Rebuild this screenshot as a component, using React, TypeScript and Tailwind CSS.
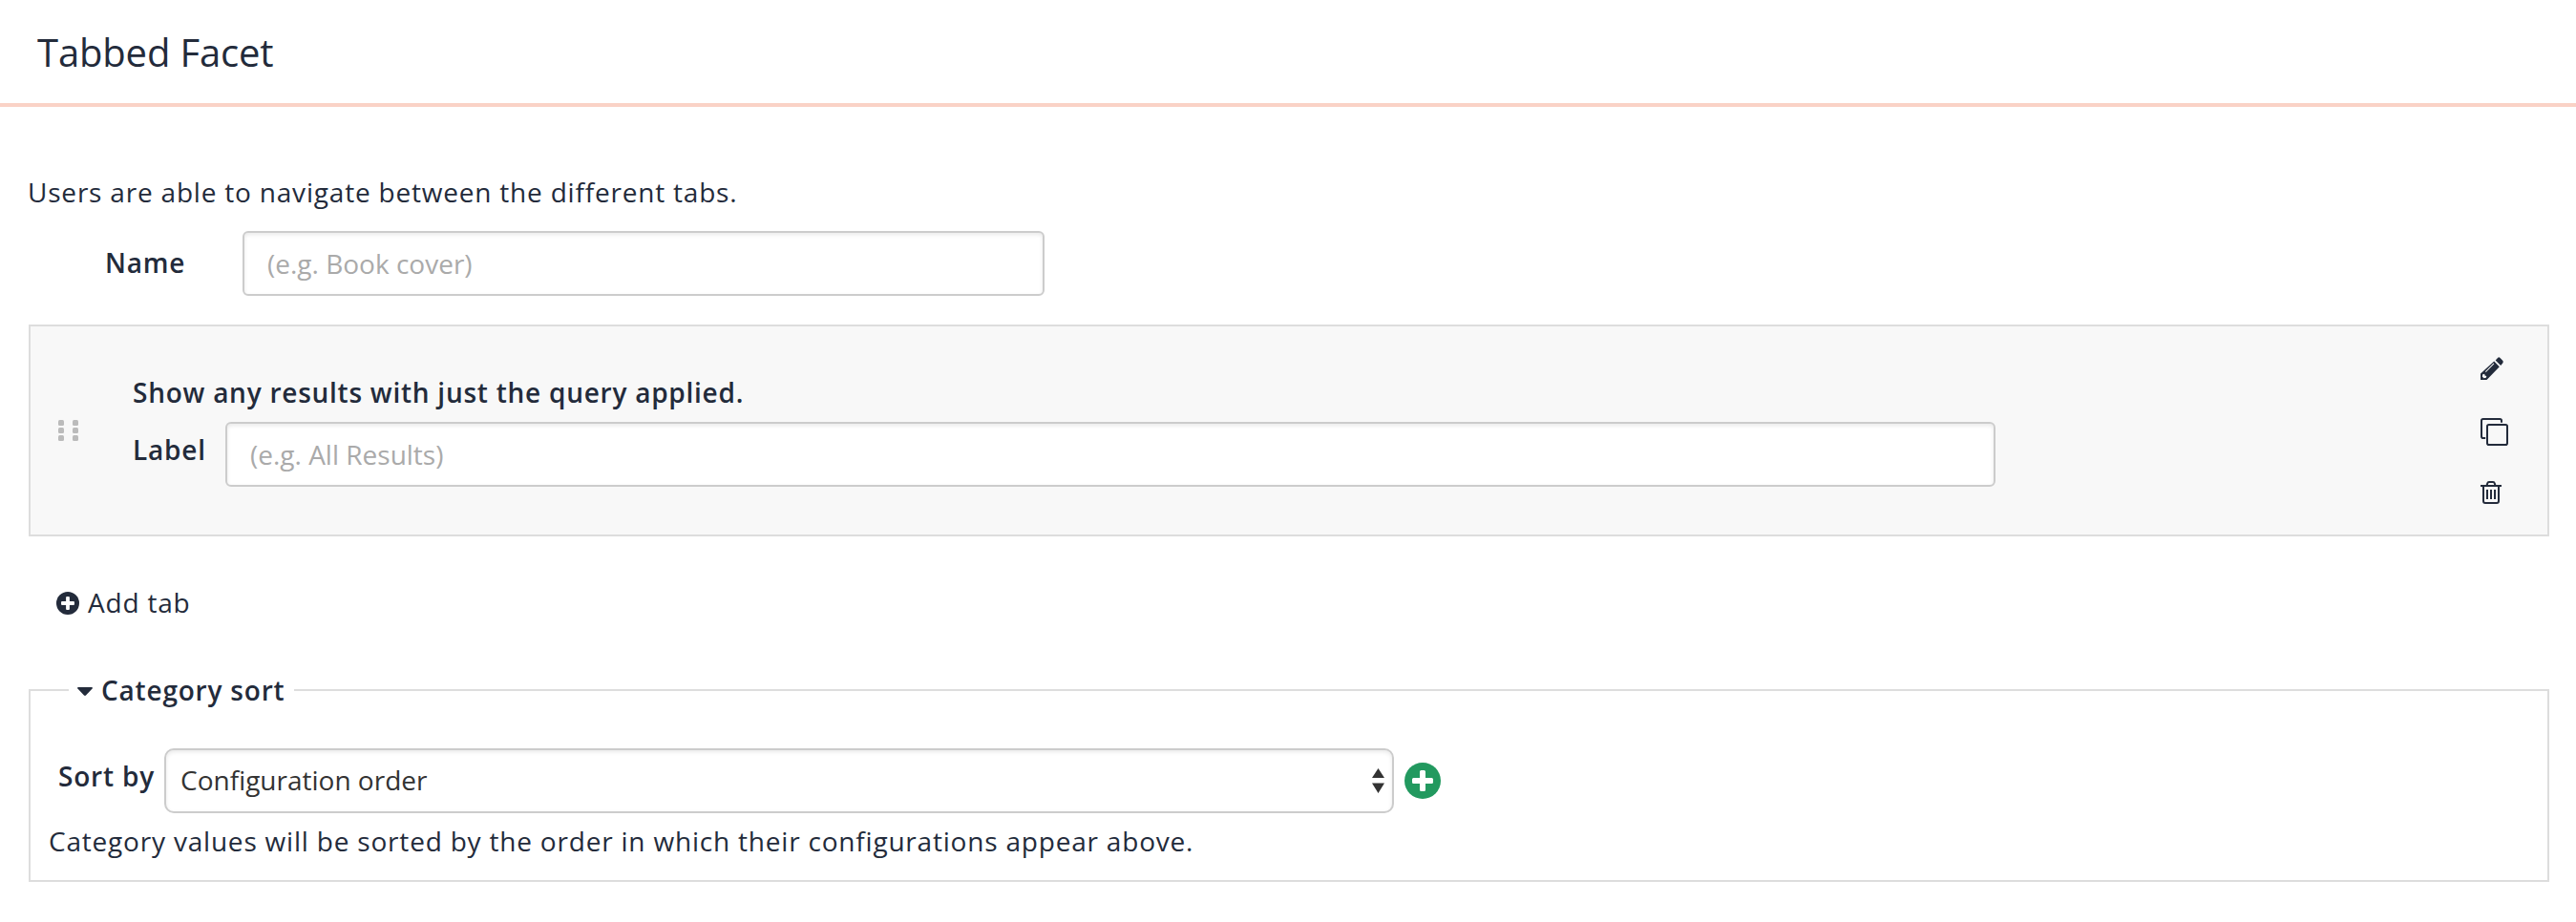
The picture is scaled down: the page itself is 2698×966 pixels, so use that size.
import { useState } from "react";

const inputClass =
  "h-[68px] rounded-[6px] border-2 border-[#ccc] bg-white px-6 text-[28px] tracking-normal text-[#333] shadow-[inset_0_2px_4px_rgba(0,0,0,0.09)] outline-none placeholder:text-[#aaa]";

const PencilIcon = () => (
  <svg className="block" width="24" height="24" viewBox="0 0 24 24" fill="currentColor">
    <path d="M15.700 3.400 18 .9Q19.200-.2 20.500.9L23.200 3.700Q24.300 5 23.300 6.300L21.200 8.900Z" />
    <path
      fillRule="evenodd"
      d="M14.200 4.600 19.800 10.200 7 23.400 6.400 24H0V17.600L.8 16.800ZM13.600 6.600 5 15.200 5.700 15.900 14.300 7.300ZM2.300 18.200 1.800 20.600 3.500 22.200 5.900 21.700 6.300 20.100 4.500 19.600 4.200 17.700Z"
    />
  </svg>
);

const CopyIcon = () => (
  <svg className="block" width="29" height="29" viewBox="0 0 29 29" fill="none" stroke="currentColor" strokeWidth="2">
    <rect x="7" y="7" width="21" height="21" rx="1.8" />
    <path d="M22 4.800V2.800Q22 1 20.200 1H2.800Q1 1 1 2.800V19.200Q1 21 2.800 21H5.200" />
  </svg>
);

const TrashIcon = () => (
  <svg className="block" width="22" height="24" viewBox="0 0 22 24" fill="none" stroke="currentColor" strokeWidth="2">
    <path d="M0 5H22M6.600 4.600 7.200 2.400Q7.600 1 9 1H13Q14.400 1 14.800 2.400L15.400 4.600" />
    <path d="M3 5V21Q3 23 5 23H17Q19 23 19 21V5" />
    <path d="M7 9V19M11 9V19M15 9V19" />
  </svg>
);

const PlusCircle = ({ className }: { className: string }) => (
  <svg className={className} viewBox="0 0 38 38">
    <circle cx="19" cy="19" r="19" fill="currentColor" />
    <path
      fill="#fff"
      d="M17.500 8h3q1.500 0 1.500 1.500V16h6.500q1.500 0 1.500 1.500v3q0 1.500-1.500 1.500H22v6.500q0 1.500-1.500 1.500h-3q-1.500 0-1.500-1.500V22H9.500q-1.500 0-1.500-1.500v-3q0-1.500 1.500-1.500H16V9.500q0-1.500 1.500-1.500z"
    />
  </svg>
);

const DragHandle = () => (
  <div className="grid cursor-move grid-cols-2 gap-x-[9px] gap-y-[2px]">
    {[0, 1, 2, 3, 4, 5].map((dot) => (
      <span key={dot} className="size-[6px] rounded-[1.5px] bg-[#bbb]" />
    ))}
  </div>
);

const App = () => {
  const [name, setName] = useState("");
  const [label, setLabel] = useState("");
  const [open, setOpen] = useState(true);

  return (
    <div className="min-h-screen bg-white font-['Open_Sans',sans-serif] text-[28px] leading-[40px] tracking-[0.8px] text-[#232b3b]">
      <header className="h-28 border-b-4 border-[#fad2c6] pt-[27px] pl-[39px]">
        <h1 className="text-[40px] leading-[56px] tracking-[-0.15px]">Tabbed Facet</h1>
      </header>

      <main className="px-7 pt-[69px]">
        <p className="pl-px">Users are able to navigate between the different tabs.</p>
        <div className="mt-[21px] flex">
          <label className="w-[226px] pt-[13px] pl-[82px] font-semibold">Name</label>
          <input
            type="text"
            className={`${inputClass} w-[840px]`}
            placeholder="(e.g. Book cover)"
            value={name}
            onChange={(e) => setName(e.target.value)}
          />
        </div>

        <section className="mt-[30px] ml-[2px] flex h-[222px] items-center border-2 border-[#ddd] bg-[#f8f8f8] pl-[29px]">
          <DragHandle />
          <div className="ml-[56px] pb-px">
            <p className="pl-px tracking-[0.75px] font-semibold">Show any results with just the query applied.</p>
            <div className="mt-[11px] flex">
              <label className="w-[98px] pt-[9px] pl-px font-semibold">Label</label>
              <input
                type="text"
                className={`${inputClass} w-[1854px]`}
                placeholder="(e.g. All Results)"
                value={label}
                onChange={(e) => setLabel(e.target.value)}
              />
            </div>
          </div>
          <div className="mr-[41px] ml-auto flex flex-col items-start">
            <button type="button" aria-label="Edit">
              <PencilIcon />
            </button>
            <button type="button" aria-label="Duplicate" className="mt-10">
              <CopyIcon />
            </button>
            <button type="button" aria-label="Delete" className="mt-[37px]">
              <TrashIcon />
            </button>
          </div>
        </section>

        <button type="button" className="mt-[49px] ml-[31px] flex items-center">
          <PlusCircle className="mt-[2px] mr-[9px] size-6" />
          Add tab
        </button>

        <fieldset className="mt-[52px] ml-[2px] h-[221px] border-2 border-[#ddd]">
          <legend className="ml-10 pr-[10px] pl-[9px] font-semibold">
            <button type="button" className="flex items-center" onClick={() => setOpen(!open)}>
              <svg className="mt-[2px] mr-[9px]" width="16" height="9" viewBox="0 0 16 9" fill="currentColor">
                <path d="M1 0H15Q16.500.3 15.600 1.400L9 8.500Q8 9.400 7 8.500L.4 1.400Q-.5.3 1 0z" />
              </svg>
              Category sort
            </button>
          </legend>
          {open && (
            <div className="pt-[41px]">
              <div className="flex">
                <label className="w-[140px] pt-[9px] pl-[29px] font-semibold">Sort by</label>
                <div className="relative">
                  <select className="block h-[68px] w-[1288px] appearance-none rounded-[10px] border-2 border-[#ccc] bg-white pr-4 pb-[2px] pl-[15px] text-[28px] tracking-normal text-[#333] shadow-[inset_0_2px_4px_rgba(0,0,0,0.09)] outline-none">
                    <option>Configuration order</option>
                  </select>
                  <svg
                    className="pointer-events-none absolute top-[21px] right-[10px]"
                    width="13"
                    height="26"
                    viewBox="0 0 13 26"
                    fill="#333"
                  >
                    <path d="M6.500 0 13 10H0zM0 15.500H13L6.500 26z" />
                  </svg>
                </div>
                <button type="button" aria-label="Add sort" className="ml-[11px] text-[#22995f]">
                  <PlusCircle className="size-[38px]" />
                </button>
              </div>
              <p className="mt-[9px] pl-[19px]">
                Category values will be sorted by the order in which their configurations appear above.
              </p>
            </div>
          )}
        </fieldset>
      </main>
    </div>
  );
};

export default App;
